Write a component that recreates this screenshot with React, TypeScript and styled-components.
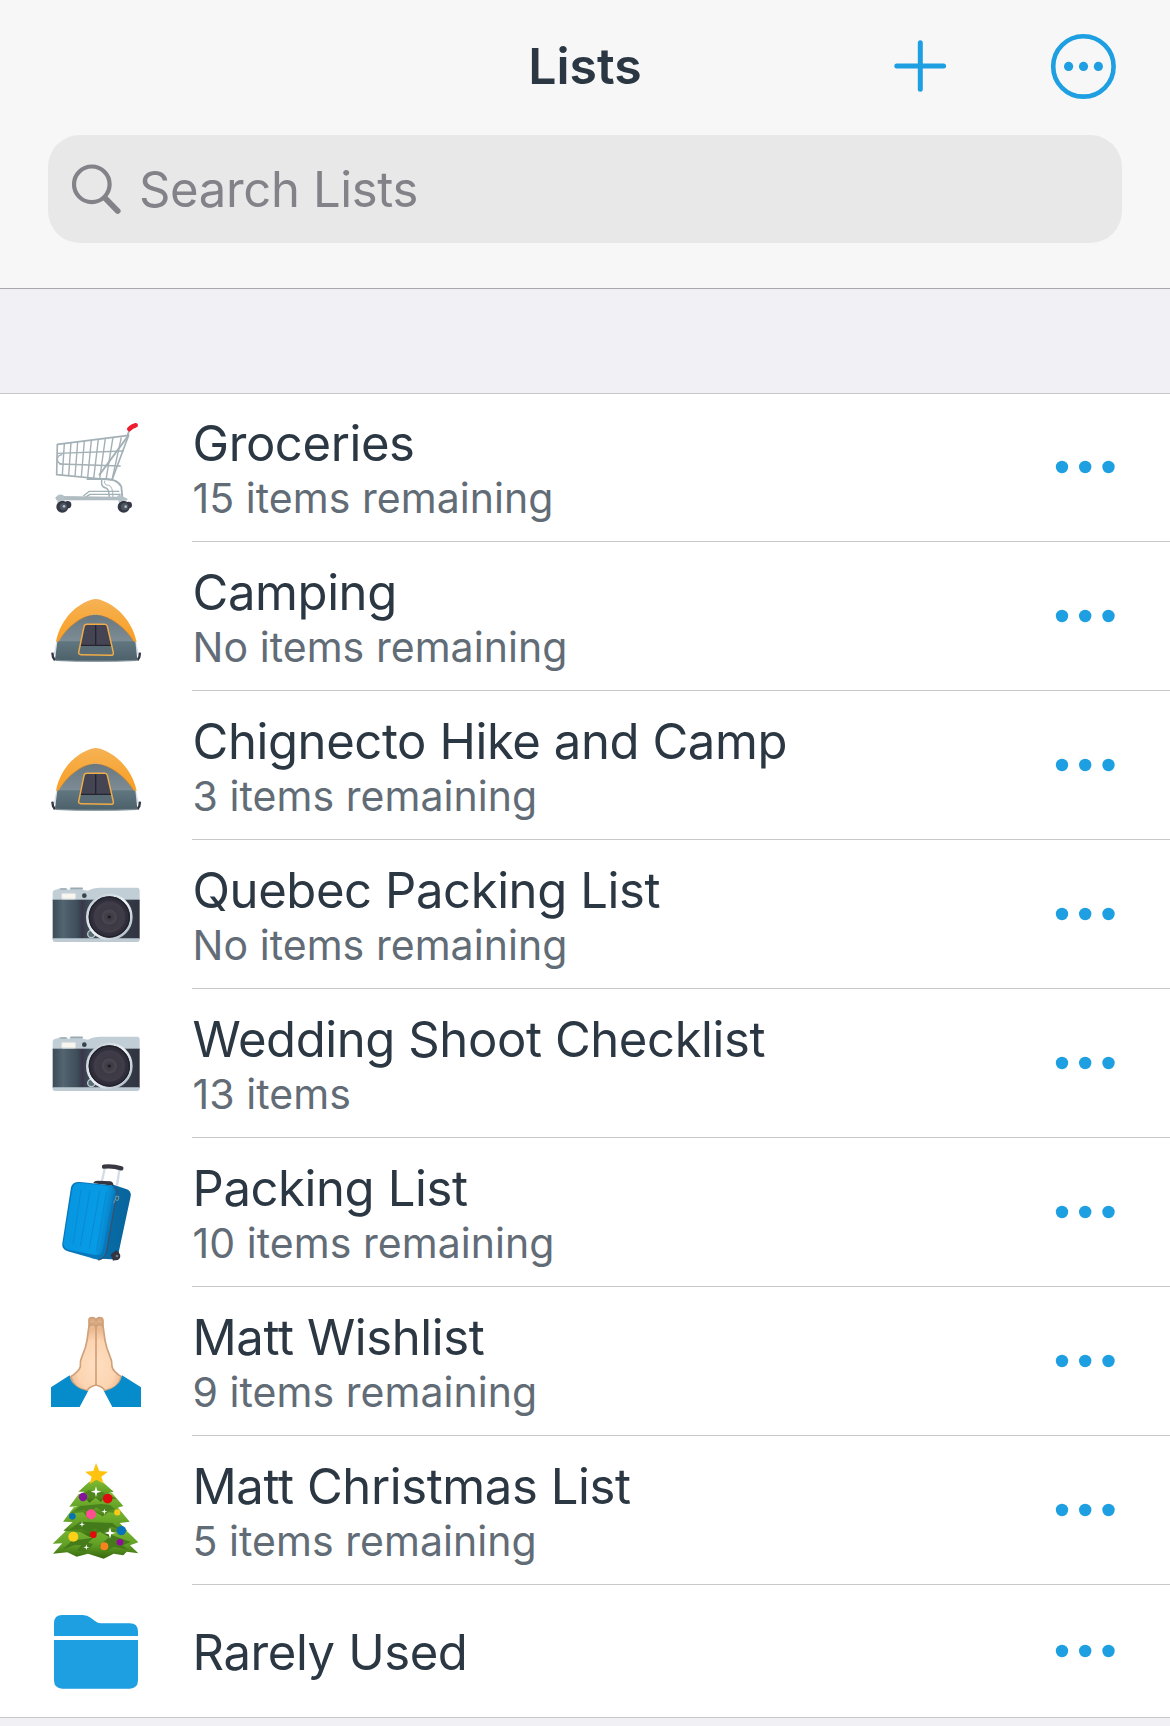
import styled, { createGlobalStyle } from 'styled-components';

interface ListInterface {
  id: number;
  name: string;
  description?: string;
  icon: React.ReactNode;
}

const CartIcon = () => (
  <StyleIcon viewBox='0 -18 390 441'>
    <g fill='none' stroke='#a3b0b6' strokeWidth='4.2' strokeLinejoin='round'>
      <path d='M82 133L296 106L246 240L80 224Z' strokeWidth='5' />
      <path d='M82 160L281 153M88 192L272 198' />
      <path d='M97 164Q82 166 82 178Q82 190 97 193' />
      <path d='M103 131L97 225M123 128L116 227M143 126L135 229M163 123L154 231M184 121L173 233M205 118L191 235M226 115L209 237M249 112L228 239' />
      <path d='M274 112L246 240' />
      <path d='M298 90L291 112L207 226' strokeWidth='5.5' />
      <path d='M170 237H232Q262 238 274 260L277 292' strokeWidth='5.5' />
      <path d='M215 240V253Q217 262 228 264Q238 268 238 296' strokeWidth='4.5' />
      <path d='M224 242Q222 256 236 256Q249 258 249 294' strokeWidth='3' />
      <path d='M80 296H160L180 283H272M160 288L178 274H268' strokeWidth='4' />
    </g>
    <path d='M76 294Q76 288 88 288L260 290Q276 286 294 297L288 301L80 301Z' fill='#b0bcc1' />
    <g fill='#353945'>
      <circle cx='113' cy='314' r='11' />
      <circle cx='296' cy='315' r='10' />
      <circle cx='97' cy='320' r='18' />
      <circle cx='281' cy='320' r='18' />
    </g>
    <g fill='#505661'>
      <circle cx='100' cy='320' r='11' />
      <circle cx='284' cy='320' r='11' />
    </g>
    <g fill='#b4c1c7'>
      <circle cx='102' cy='319' r='4' />
      <circle cx='287' cy='320' r='4' />
      <path d='M82 287Q90 280 102 287L104 304Q92 299 82 308ZM262 287Q272 282 278 290L292 302Q278 300 266 306Z' />
    </g>
    <path d='M298 87Q305 79 317 76' stroke='#ed1c2e' strokeWidth='14' strokeLinecap='round' fill='none' />
  </StyleIcon>
);

const TentIcon = () => (
  <StyleIcon viewBox='0 -114 390 444'>
    <defs>
      <linearGradient id='tentTop' x1='0' y1='0' x2='0' y2='1'>
        <stop offset='0' stopColor='#f5b255' />
        <stop offset='1' stopColor='#fa9e20' />
      </linearGradient>
      <linearGradient id='tentBase' x1='0' y1='0' x2='0' y2='1'>
        <stop offset='0' stopColor='#617780' />
        <stop offset='1' stopColor='#4c606a' />
      </linearGradient>
      <linearGradient id='tentWall' x1='0' y1='0' x2='0' y2='1'>
        <stop offset='0' stopColor='#687780' />
        <stop offset='1' stopColor='#8d9ca4' />
      </linearGradient>
    </defs>
    <path d='M83 184L74 224M314 184L324 224' stroke='#d9dfea' strokeWidth='7' />
    <path d='M67 218L69 231L75 241M330 218L328 231L322 241' stroke='#343743' strokeWidth='7' fill='none' />
    <path d='M86 184Q128 104 196 104Q266 106 312 184L322 241Q198 247 75 241Z' fill='url(#tentWall)' />
    <path d='M82 184H316L322 241Q198 247 75 241Z' fill='url(#tentBase)' />
    <path d='M78 241Q198 246 320 241' stroke='#7e8d96' strokeWidth='4' fill='none' />
    <path d='M78 186C88 130 126 78 184 59Q197 55 211 59C270 79 309 132 320 186L311 184C290 146 240 106 196 102C155 106 112 140 85 184Z' fill='url(#tentTop)' />
    <path d='M85 184C112 142 154 107 196 103C240 107 290 146 311 184' stroke='#cf8425' strokeWidth='2' fill='none' />
    <path d='M170 133H224Q230 133 232 139L250 218Q251 226 243 226L153 224Q145 224 146 217L162 140Q164 133 170 133Z' fill='#454453' />
    <path d='M151 196H245L250 218Q251 226 243 226L153 224Q145 224 146 217Z' fill='#596b75' />
    <path d='M197 136V196M151 196H245' stroke='#252431' strokeWidth='4' />
    <path d='M170 133H224Q230 133 232 139L250 218Q251 226 243 226L153 224Q145 224 146 217L162 140Q164 133 170 133Z' fill='none' stroke='#f0ac48' strokeWidth='4.5' />
  </StyleIcon>
);

const CameraIcon = () => (
  <StyleIcon viewBox='0 -75 390 444'>
    <defs>
      <linearGradient id='cameraBody'>
        <stop offset='0' stopColor='#3c4c58' />
        <stop offset='.12' stopColor='#536570' />
        <stop offset='.28' stopColor='#3e4e5a' />
        <stop offset='.34' stopColor='#39374a' />
        <stop offset='.42' stopColor='#3d4c59' />
        <stop offset='1' stopColor='#303440' />
      </linearGradient>
      <radialGradient id='cameraLens'>
        <stop offset='0' stopColor='#35333c' />
        <stop offset='.32' stopColor='#4b4752' />
        <stop offset='.36' stopColor='#3c3944' />
        <stop offset='.68' stopColor='#403d49' />
        <stop offset='.74' stopColor='#32303c' />
        <stop offset='1' stopColor='#292834' />
      </radialGradient>
      <linearGradient id='cameraRing' x1='0' y1='0' x2='1' y2='1'>
        <stop offset='0' stopColor='#b9c5cc' />
        <stop offset='.5' stopColor='#edf2f5' />
        <stop offset='1' stopColor='#a6b4bf' />
      </linearGradient>
    </defs>
    <path d='M68 84Q68 75 78 74L90 70H110L116 76L122 69H158V74L174 77Q190 67 216 68H322Q329 68 329 77V108H68Z' fill='#c1ced5' />
    <path d='M91 72H109M121 70H158' stroke='#9baab2' strokeWidth='5' />
    <rect x='68' y='104' width='261' height='118' fill='url(#cameraBody)' />
    <path d='M68 220H329V225Q329 231 322 231H75Q68 231 68 225Z' fill='#becbd3' />
    <rect x='95' y='85' width='42' height='17' rx='3' fill='#f8f6ef' stroke='#d9dedf' strokeWidth='3' />
    <circle cx='163' cy='92' r='7' fill='#39434e' />
    <circle cx='184' cy='207' r='11' fill='#596b75' stroke='#bdc9d0' strokeWidth='4' />
    <circle cx='238' cy='156' r='66' fill='url(#cameraLens)' stroke='url(#cameraRing)' strokeWidth='8' />
    <circle cx='238' cy='156' r='60' fill='none' stroke='#22222d' strokeWidth='4' />
    <circle cx='238' cy='156' r='4' fill='#16161e' />
  </StyleIcon>
);

const SuitcaseIcon = () => (
  <StyleIcon viewBox='0 -36 390 444'>
    <defs>
      <linearGradient id='caseFront' x1='0' y1='0' x2='1' y2='.25'>
        <stop offset='0' stopColor='#0784cb' />
        <stop offset='.2' stopColor='#0797e2' />
        <stop offset='.8' stopColor='#079be6' />
        <stop offset='1' stopColor='#087fc2' />
      </linearGradient>
      <linearGradient id='caseSide'>
        <stop offset='0' stopColor='#0870ae' />
        <stop offset='1' stopColor='#08649b' />
      </linearGradient>
    </defs>
    <path d='M224 56L215 97M268 60L261 106' stroke='#d5dbe7' strokeWidth='7' />
    <path d='M222 50Q248 47 274 55' stroke='#383742' strokeWidth='13' strokeLinecap='round' fill='none' />
    <path d='M246 103L286 116Q305 121 302 139L265 312Q261 327 244 328L185 325L218 270Z' fill='url(#caseSide)' />
    <path d='M190 100Q191 92 203 92L241 94Q251 96 250 107Z' fill='#343642' />
    <path d='M151 96L242 106Q263 110 259 132L227 313Q222 331 203 329L113 304Q94 298 97 280L123 112Q128 94 151 96Z' fill='#0878bd' />
    <path d='M151 99L238 108Q255 112 251 130L218 301Q213 317 196 315L116 299Q98 294 101 277L127 117Q131 98 151 99Z' fill='url(#caseFront)' />
    <path d='M153 120L129 283M180 121L151 289M209 123L178 296M229 127L200 303' stroke='#088ad3' strokeWidth='3' fill='none' />
    <path d='M253 112Q263 119 260 132L230 305Q224 327 205 330' stroke='#35536d' strokeWidth='4' fill='none' />
    <path d='M258 138L267 140L264 151L256 150ZM254 151L251 160' stroke='#6f9ba9' strokeWidth='3' fill='#2b5a71' />
    <path d='M242 314L258 301L267 307L264 328L249 332Z' fill='#25384b' />
    <circle cx='258' cy='318' r='13' fill='#343642' />
    <circle cx='261' cy='318' r='4' fill='#747987' />
  </StyleIcon>
);

const PrayIcon = () => (
  <StyleIcon viewBox='0 -39 390 444'>
    <defs>
      <radialGradient id='palm' cx='.5' cy='.62' r='.55'>
        <stop offset='0' stopColor='#ffdfc2' />
        <stop offset='.7' stopColor='#fcd4b1' />
        <stop offset='1' stopColor='#e9b991' />
      </radialGradient>
    </defs>
    <g stroke='#cfa079' strokeWidth='5' strokeLinejoin='round'>
      <path d='M177 80V60Q177 53 187 53Q196 53 198 62Q200 53 209 53Q219 53 219 62V80Z' fill='#d9aa83' />
      <path d='M198 82Q196 73 187 73Q177 74 176 84L171 121Q168 143 156 169Q149 184 151 200Q146 215 122 230Q130 266 172 272Q176 261 198 255Q220 261 224 272Q265 266 274 230Q250 215 246 200Q247 184 240 169Q229 144 225 121L220 84Q219 74 209 73Q200 73 198 82Z' fill='url(#palm)' />
      <path d='M198 77V256' fill='none' />
      <path d='M183 65Q187 62 192 65M204 65Q209 62 214 65' stroke='#e2b892' strokeWidth='3' fill='none' />
    </g>
    <path d='M63 262L119 226Q122 261 174 274L149 321H63ZM333 262L276 226Q271 261 222 274L247 321H333Z' fill='#078ccb' />
  </StyleIcon>
);

const baubles = [
  { x: 159, y: 141, r: 12.5, color: '#84149c' },
  { x: 233, y: 146, r: 14.5, color: '#df0b0e' },
  { x: 127, y: 199, r: 10, color: '#0870b4' },
  { x: 183, y: 193, r: 15, color: '#ff4f91' },
  { x: 262, y: 187, r: 9.5, color: '#f9c91c' },
  { x: 274, y: 242, r: 14, color: '#0872b9' },
  { x: 130, y: 260, r: 15, color: '#fbd018' },
  { x: 190, y: 254, r: 10, color: '#e20b0e' },
  { x: 270, y: 277, r: 10, color: '#920c99' },
  { x: 223, y: 289, r: 12, color: '#f7831c' },
];

const sparkles = [
  { x: 198, y: 125, size: 16 },
  { x: 223, y: 185, size: 9 },
  { x: 156, y: 223, size: 9 },
  { x: 240, y: 249, size: 17 },
  { x: 169, y: 292, size: 9 },
];

const TreeIcon = () => (
  <StyleIcon viewBox='0 -42 390 444'>
    <defs>
      <linearGradient id='treeLeaf' x1='0' y1='0' x2='0' y2='1'>
        <stop offset='0' stopColor='#82bd35' />
        <stop offset='.6' stopColor='#609f25' />
        <stop offset='1' stopColor='#38670f' />
      </linearGradient>
    </defs>
    <path d='M129 222L68 281L97 280L69 311L112 307L140 320L174 311L221 326L251 311L280 316L290 305L325 310L300 286L325 277L272 225Z' fill='url(#treeLeaf)' />
    <path d='M190 263L174 278L190 282L168 305L140 302L154 285L132 286L97 299L126 272ZM245 255L302 276L278 286L294 299L252 290L230 303L207 288Z' fill='#467b1b' />
    <path d='M132 170L99 215L128 216L100 242L151 246L179 261L209 245L239 262L253 245L292 242L269 219L299 215L260 168Z' fill='url(#treeLeaf)' />
    <path d='M151 215L118 239L155 238L176 247L195 237L216 246L246 231L270 238L247 219Z' fill='#447b1a' />
    <path d='M146 132L118 170L142 169L121 190L160 187L175 207L196 187L218 199L235 187L276 190L260 174L280 168L246 129Z' fill='url(#treeLeaf)' />
    <path d='M150 168L134 184L164 180L179 188L199 172L221 187L254 177L240 165L214 162Z' fill='#4a821e' />
    <path d='M176 97L145 125L163 125L144 142L163 141L178 158L197 143L213 156L222 143L261 148L234 130L251 125L218 96L199 88Z' fill='url(#treeLeaf)' />
    <path d='M175 121L153 139L174 135L186 146L199 135L218 145L237 140L219 127Z' fill='#4f861f' />
    <path d='M198 39L208 63L234 65L214 80L221 101L199 89L179 102L185 80L165 65L190 63Z' fill='#ffc20e' />
    {sparkles.map(({ x, y, size }) => (
      <path
        key={x}
        transform={`translate(${x} ${y}) scale(${size})`}
        d='M0 -1L.22 -.22L1 0L.22 .22L0 1L-.22 .22L-1 0L-.22 -.22Z'
        fill='#fff'
      />
    ))}
    {baubles.map(({ x, y, r, color }) => (
      <circle key={x} cx={x} cy={y} r={r} fill={color} />
    ))}
  </StyleIcon>
);

const FolderIcon = () => (
  <StyleIcon viewBox='0 45 390 396'>
    <path d='M72 198V160Q72 135 97 135H158Q172 135 182 143L196 154Q203 160 212 160H299Q324 160 324 185V198ZM72 210H324V331Q324 356 299 356H97Q72 356 72 331Z' fill='#1d9fe1' />
  </StyleIcon>
);

const DotsIcon = () => (
  <svg width='60' height='14' viewBox='0 0 60 14' fill='#1d9fe1'>
    <circle cx='7' cy='7' r='6.2' />
    <circle cx='30.2' cy='7' r='6.2' />
    <circle cx='53.5' cy='7' r='6.2' />
  </svg>
);

const lists: ListInterface[] = [
  { id: 1, name: 'Groceries', description: '15 items remaining', icon: <CartIcon /> },
  { id: 2, name: 'Camping', description: 'No items remaining', icon: <TentIcon /> },
  { id: 3, name: 'Chignecto Hike and Camp', description: '3 items remaining', icon: <TentIcon /> },
  { id: 4, name: 'Quebec Packing List', description: 'No items remaining', icon: <CameraIcon /> },
  { id: 5, name: 'Wedding Shoot Checklist', description: '13 items', icon: <CameraIcon /> },
  { id: 6, name: 'Packing List', description: '10 items remaining', icon: <SuitcaseIcon /> },
  { id: 7, name: 'Matt Wishlist', description: '9 items remaining', icon: <PrayIcon /> },
  { id: 8, name: 'Matt Christmas List', description: '5 items remaining', icon: <TreeIcon /> },
  { id: 9, name: 'Rarely Used', icon: <FolderIcon /> },
];

const ListRow: React.FunctionComponent<ListInterface> = ({ name, description, icon }) => (
  <StyleRow $folder={!description}>
    <StyleIconCell>{icon}</StyleIconCell>
    <StyleRowBody>
      <StyleText>
        <p className='title'>{name}</p>
        {description && <p className='description'>{description}</p>}
      </StyleText>
      <StyleButton aria-label='More'>
        <DotsIcon />
      </StyleButton>
    </StyleRowBody>
  </StyleRow>
);

const App = () => {
  return (
    <StylePage>
      <GlobalStyle />
      <StyleHeader>
        <StyleToolbar>
          <h1>Lists</h1>
          <StyleActions>
            <StyleButton aria-label='Add'>
              <svg width='54' height='54' viewBox='0 0 54 54' stroke='#1d9fe1' strokeWidth='5' strokeLinecap='round'>
                <path d='M27.3 3.7V50.3M3.8 27H50.6' />
              </svg>
            </StyleButton>
            <StyleButton aria-label='Options'>
              <svg width='66' height='66' viewBox='0 0 66 66' fill='#1d9fe1'>
                <circle cx='33.4' cy='33.4' r='30.2' fill='none' stroke='#1d9fe1' strokeWidth='4.6' />
                <circle cx='18.6' cy='33.4' r='4.6' />
                <circle cx='33.5' cy='33.4' r='4.6' />
                <circle cx='48.4' cy='33.4' r='4.6' />
              </svg>
            </StyleButton>
          </StyleActions>
        </StyleToolbar>
        <StyleSearch>
          <svg width='52' height='52' viewBox='0 0 52 52' fill='none' stroke='#838288' strokeLinecap='round'>
            <circle cx='21.8' cy='21.3' r='17.8' strokeWidth='4.2' />
            <path d='M35 35L47.7 48' strokeWidth='5.8' />
          </svg>
          <span>Search Lists</span>
        </StyleSearch>
      </StyleHeader>
      <StyleList>
        {lists.map((list) => (
          <ListRow key={list.id} {...list} />
        ))}
      </StyleList>
    </StylePage>
  );
};

export default App;

const GlobalStyle = createGlobalStyle`
  * {
    box-sizing: border-box;
    margin: 0;
    padding: 0;
  }
  body {
    background-color: #f0f0f5;
    font-family: Inter, 'Liberation Sans', sans-serif;
  }
`;

const StylePage = styled.main`
  width: 1170px;
  height: 1726px;
  background-color: #f0f0f5;
  overflow: hidden;
`;

const StyleHeader = styled.header`
  height: 289px;
  padding: 0 48px;
  background-color: #f7f7f7;
  border-bottom: 1px solid #a8a8ad;
`;

const StyleToolbar = styled.div`
  display: grid;
  grid-template-columns: 1fr auto 1fr;
  align-items: center;
  height: 135px;
  padding-bottom: 3px;
  h1 {
    font-size: 50px;
    font-weight: 600;
    line-height: 60px;
    letter-spacing: 0;
    color: #2b3742;
    grid-column: 2;
  }
`;

const StyleActions = styled.div`
  display: flex;
  align-items: center;
  justify-content: flex-end;
  gap: 103px;
  padding-right: 6px;
`;

const StyleButton = styled.button`
  display: flex;
  border: none;
  outline: none;
  background-color: transparent;
  cursor: pointer;
`;

const StyleSearch = styled.div`
  display: flex;
  align-items: center;
  gap: 17px;
  height: 108px;
  padding: 0 22px;
  border-radius: 32px;
  background-color: #e8e8e8;
  span {
    font-size: 49px;
    line-height: 60px;
    letter-spacing: -0.35px;
    padding-top: 2px;
    color: #838288;
  }
`;

const StyleList = styled.ul`
  margin-top: 104px;
  list-style: none;
  background-color: #fff;
  border-top: 1px solid #c7c7ca;
  border-bottom: 1px solid #c7c7ca;
`;

const StyleRowBody = styled.div`
  display: flex;
  flex: 1;
  align-items: center;
  justify-content: space-between;
  padding-right: 55px;
  border-bottom: 1px solid #c7c7ca;
`;

const StyleRow = styled.li<{ $folder: boolean }>`
  display: flex;
  height: ${(props) => (props.$folder ? '132px' : '149px')};
  &:first-child {
    height: 148px;
  }
  &:first-child ${StyleRowBody} {
    padding-bottom: 1px;
  }
  &:last-child ${StyleRowBody} {
    border-bottom: none;
  }
`;

const StyleIconCell = styled.div`
  width: 192px;
  padding-left: 30px;
`;

const StyleIcon = styled.svg`
  display: block;
  width: 130px;
  height: auto;
`;

const StyleText = styled.div`
  padding: 3px 0 0 0.5px;
  .title {
    font-size: 49px;
    line-height: 60px;
    letter-spacing: -0.4px;
    color: #2b3742;
  }
  .description {
    font-size: 41px;
    line-height: 49px;
    letter-spacing: 0.05px;
    color: #626c76;
  }
`;
